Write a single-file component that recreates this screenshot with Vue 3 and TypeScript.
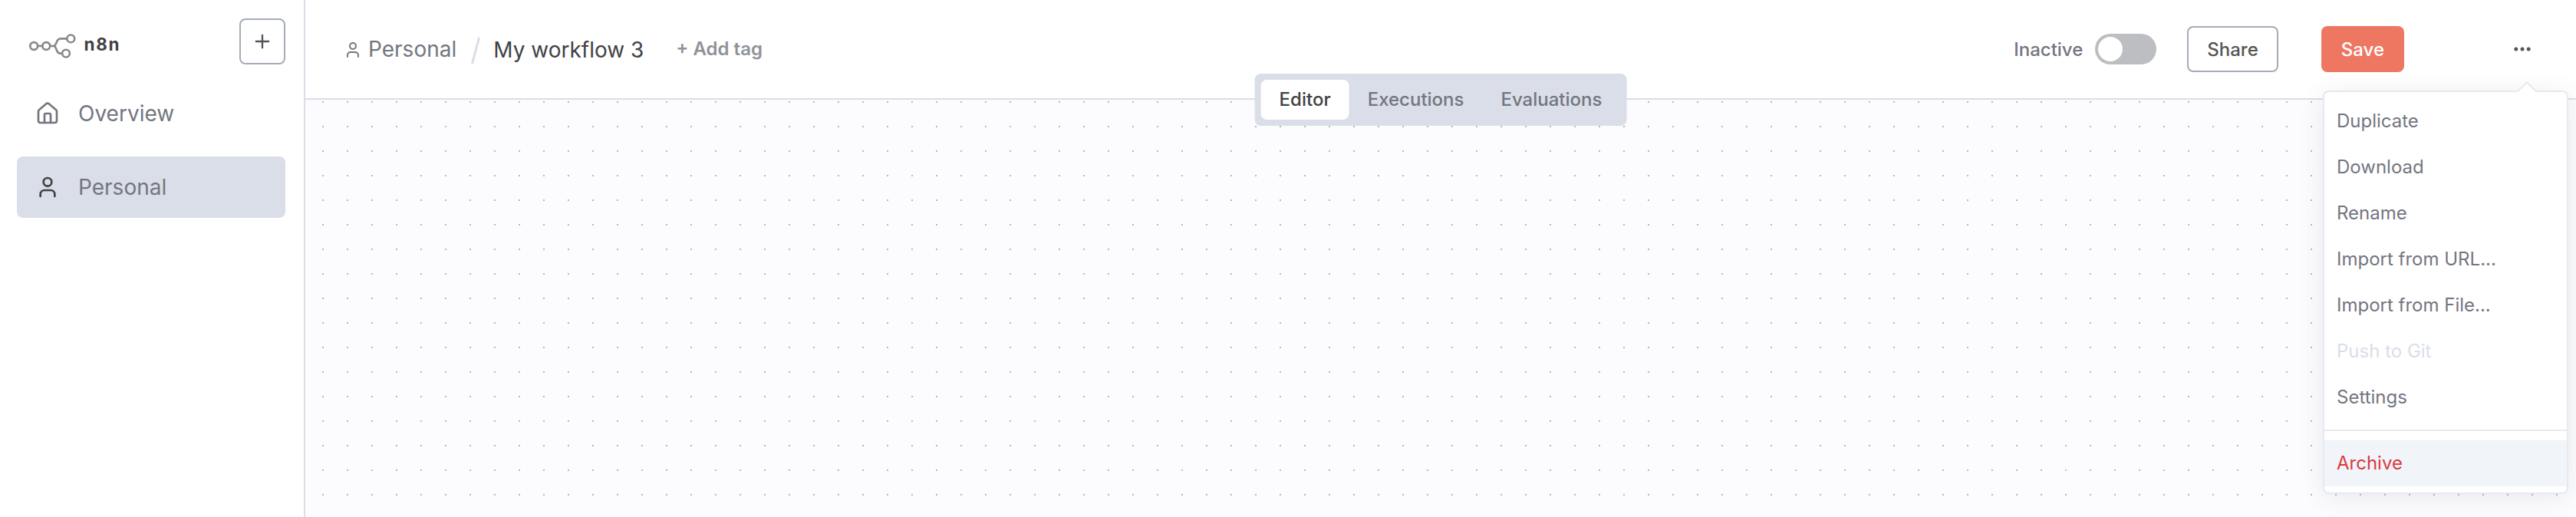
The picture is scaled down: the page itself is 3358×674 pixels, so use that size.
<script setup lang="ts">
import { ref } from 'vue'

interface MenuItem {
  label: string
  disabled?: boolean
}

const tabs = ['Editor', 'Executions', 'Evaluations']
const activeTab = ref('Editor')

const menuItems: MenuItem[] = [
  { label: 'Duplicate' },
  { label: 'Download' },
  { label: 'Rename' },
  { label: 'Import from URL...' },
  { label: 'Import from File...' },
  { label: 'Push to Git', disabled: true },
  { label: 'Settings' },
]
</script>

<template>
  <div class="app">
    <aside class="sidebar">
      <div class="brand-row">
        <div class="brand">
          <svg class="logo" width="64" height="36" viewBox="0 0 64 36" fill="none" stroke="#888888" stroke-width="2.6">
            <circle cx="8.2" cy="18" r="4.9" />
            <circle cx="24.3" cy="18" r="4.9" />
            <circle cx="56.3" cy="8.4" r="4.9" />
            <circle cx="50" cy="27.6" r="4.9" />
            <path d="M13.1 18H19.4M29.2 18H33.5C39 18 36 8.4 43 8.4H51.4M33.5 18C39 18 36 27.6 42.5 27.6H45.1" />
          </svg>
          <span class="brand-name">n8n</span>
        </div>
        <button class="add-button">
          <svg class="icon" width="28" height="28" viewBox="0 0 24 24"><path d="M5 12h14M12 5v14" /></svg>
        </button>
      </div>
      <nav class="nav">
        <a class="nav-item">
          <svg class="icon" width="32" height="32" viewBox="0 0 24 24">
            <path d="M15 21v-8a1 1 0 0 0-1-1h-4a1 1 0 0 0-1 1v8" />
            <path d="M3 10a2 2 0 0 1 .709-1.528l7-5.999a2 2 0 0 1 2.582 0l7 5.999A2 2 0 0 1 21 10v9a2 2 0 0 1-2 2H5a2 2 0 0 1-2-2z" />
          </svg>
          <span>Overview</span>
        </a>
        <a class="nav-item active">
          <svg class="icon" width="32" height="32" viewBox="0 0 24 24">
            <path d="M19 21v-2a4 4 0 0 0-4-4H9a4 4 0 0 0-4 4v2" />
            <circle cx="12" cy="7" r="4" />
          </svg>
          <span>Personal</span>
        </a>
      </nav>
    </aside>

    <main class="main">
      <header class="header">
        <div class="crumbs">
          <svg class="icon crumb-icon" width="24" height="24" viewBox="0 0 24 24">
            <path d="M19 21v-2a4 4 0 0 0-4-4H9a4 4 0 0 0-4 4v2" />
            <circle cx="12" cy="7" r="4" />
          </svg>
          <span class="crumb">Personal</span>
          <svg class="slash" width="14" height="36" viewBox="0 0 14 36"><path d="M11.6 1L2.4 35" /></svg>
          <span class="title">My workflow 3</span>
          <span class="add-tag">+ Add tag</span>
        </div>
        <div class="actions">
          <span class="status">Inactive</span>
          <span class="switch"><span class="knob"></span></span>
          <button class="btn share">Share</button>
          <button class="btn save">Save</button>
          <svg class="dots" width="24" height="24" viewBox="0 0 24 24">
            <circle cx="3.8" cy="12" r="2.5" />
            <circle cx="12" cy="12" r="2.5" />
            <circle cx="20.2" cy="12" r="2.5" />
          </svg>
        </div>
      </header>
      <section class="canvas"></section>

      <div class="tabs">
        <button
          v-for="tab in tabs"
          :key="tab"
          class="tab"
          :class="{ selected: tab === activeTab }"
          @click="activeTab = tab"
        >{{ tab }}</button>
      </div>

      <div class="menu">
        <svg class="arrow" width="28" height="15" viewBox="0 0 28 15">
          <path class="arrow-fill" d="M0 15L2 13L14 1L26 13L28 15Z" />
          <path class="arrow-line" d="M2 13L14 1.4L26 13" />
        </svg>
        <div v-for="item in menuItems" :key="item.label" class="menu-item" :class="{ disabled: item.disabled }">
          {{ item.label }}
        </div>
        <div class="divider"></div>
        <div class="menu-item danger">Archive</div>
      </div>
    </main>
  </div>
</template>

<style>
body {
  margin: 0;
}
</style>

<style scoped>
.app {
  display: flex;
  height: 674px;
  overflow: hidden;
  background: #fff;
  font-family: Inter, 'Liberation Sans', sans-serif;
  color: #73767f;
}
.app * {
  box-sizing: border-box;
}
button {
  margin: 0;
  padding: 0;
  border: 0;
  background: none;
  font: inherit;
  color: inherit;
}
.icon {
  flex: none;
  fill: none;
  stroke: currentColor;
  stroke-width: 2;
  stroke-linecap: round;
  stroke-linejoin: round;
}

.sidebar {
  flex: none;
  width: 398px;
  padding: 24px 24px 0 22px;
  border-right: 2px solid #dadee8;
}
.brand-row {
  display: flex;
  justify-content: space-between;
  height: 60px;
}
.brand {
  display: flex;
  align-items: center;
  height: 36px;
  margin: 18px 0 0 14px;
}
.logo {
  flex: none;
}
.brand-name {
  margin-left: 9.5px;
  padding-bottom: 4px;
  font-size: 22.5px;
  font-weight: 700;
  line-height: 32px;
  letter-spacing: 1.7px;
  color: #414244;
}
.add-button {
  display: flex;
  align-items: center;
  justify-content: center;
  width: 60px;
  height: 60px;
  border: 2px solid #a5abb9;
  border-radius: 8px;
  color: #555;
}
.nav {
  display: flex;
  flex-direction: column;
  gap: 16px;
  margin-top: 24px;
}
.nav-item {
  display: flex;
  align-items: center;
  gap: 24px;
  height: 80px;
  padding-left: 24px;
  border-radius: 8px;
  font-size: 28px;
}
.nav-item.active {
  background: #dadee8;
}
.nav-item.active .icon {
  color: #414244;
}

.main {
  position: relative;
  flex: 1;
  display: flex;
  flex-direction: column;
  min-width: 0;
}
.header {
  flex: none;
  display: flex;
  align-items: center;
  justify-content: space-between;
  height: 130px;
  padding: 0 58px 2px 50px;
  border-bottom: 2px solid #dadee8;
}
.crumbs {
  display: flex;
  align-items: center;
  height: 40px;
  margin-top: 2px;
  font-size: 28px;
  line-height: 40px;
  white-space: nowrap;
}
.crumb-icon {
  margin-top: 2px;
}
.crumb {
  margin-left: 8px;
}
.slash {
  margin: 4px 0 0 18px;
  fill: none;
  stroke: #dadee8;
  stroke-width: 3;
}
.title {
  margin: 2px 0 0 16px;
  color: #414244;
}
.add-tag {
  margin-left: 42px;
  font-size: 24px;
  font-weight: 600;
  color: #909298;
}
.actions {
  display: flex;
  align-items: center;
  height: 60px;
  margin-top: 2px;
  font-size: 24px;
  font-weight: 500;
}
.switch {
  display: flex;
  align-items: center;
  width: 80px;
  height: 40px;
  margin: 0 40px 0 16px;
  padding-left: 4px;
  border-radius: 20px;
  background: #bdbec2;
}
.knob {
  width: 32px;
  height: 32px;
  border-radius: 50%;
  background: #fff;
}
.btn {
  height: 60px;
  border-radius: 8px;
  padding: 0 24px;
}
.share {
  border: 2px solid #a5abb9;
  color: #555;
}
.save {
  margin-left: 56px;
  padding: 0 26px;
  background: #ee7762;
  color: #fff;
}
.dots {
  margin-left: 142px;
  fill: #555;
}

.canvas {
  flex: 1;
  background-color: #fcfcfe;
  background-image: conic-gradient(from 0deg at 2px 2px, transparent 270deg, #b9b9bb 270deg);
  background-size: 32px 32px;
  background-position: 22px 2px;
}

.tabs {
  position: absolute;
  top: 96px;
  left: 50%;
  transform: translateX(-50%);
  display: flex;
  height: 68px;
  padding: 8px;
  border-radius: 8px;
  background: #dadee8;
}
.tab {
  height: 52px;
  padding: 0 24px 2px;
  border-radius: 8px;
  font-size: 24px;
  font-weight: 500;
}
.tab.selected {
  background: #fff;
  color: #414244;
}

.menu {
  position: absolute;
  top: 118px;
  right: 10px;
  width: 320px;
  padding: 8px 0;
  border: 2px solid #e6e9f1;
  border-radius: 8px;
  background: #fff;
  box-shadow: 0 4px 32px rgba(68, 70, 90, 0.1);
}
.arrow {
  position: absolute;
  top: -14px;
  right: 38px;
}
.arrow-fill {
  fill: #fff;
}
.arrow-line {
  fill: none;
  stroke: #e6e9f1;
  stroke-width: 2;
}
.menu-item {
  height: 60px;
  padding-left: 16px;
  font-size: 24px;
  line-height: 60px;
}
.menu-item.disabled {
  color: #dadee8;
}
.menu-item.danger {
  background: #f1f4f9;
  color: #d93a3d;
}
.divider {
  height: 2px;
  margin: 12px 0;
  background: #e6e9f1;
}
</style>
